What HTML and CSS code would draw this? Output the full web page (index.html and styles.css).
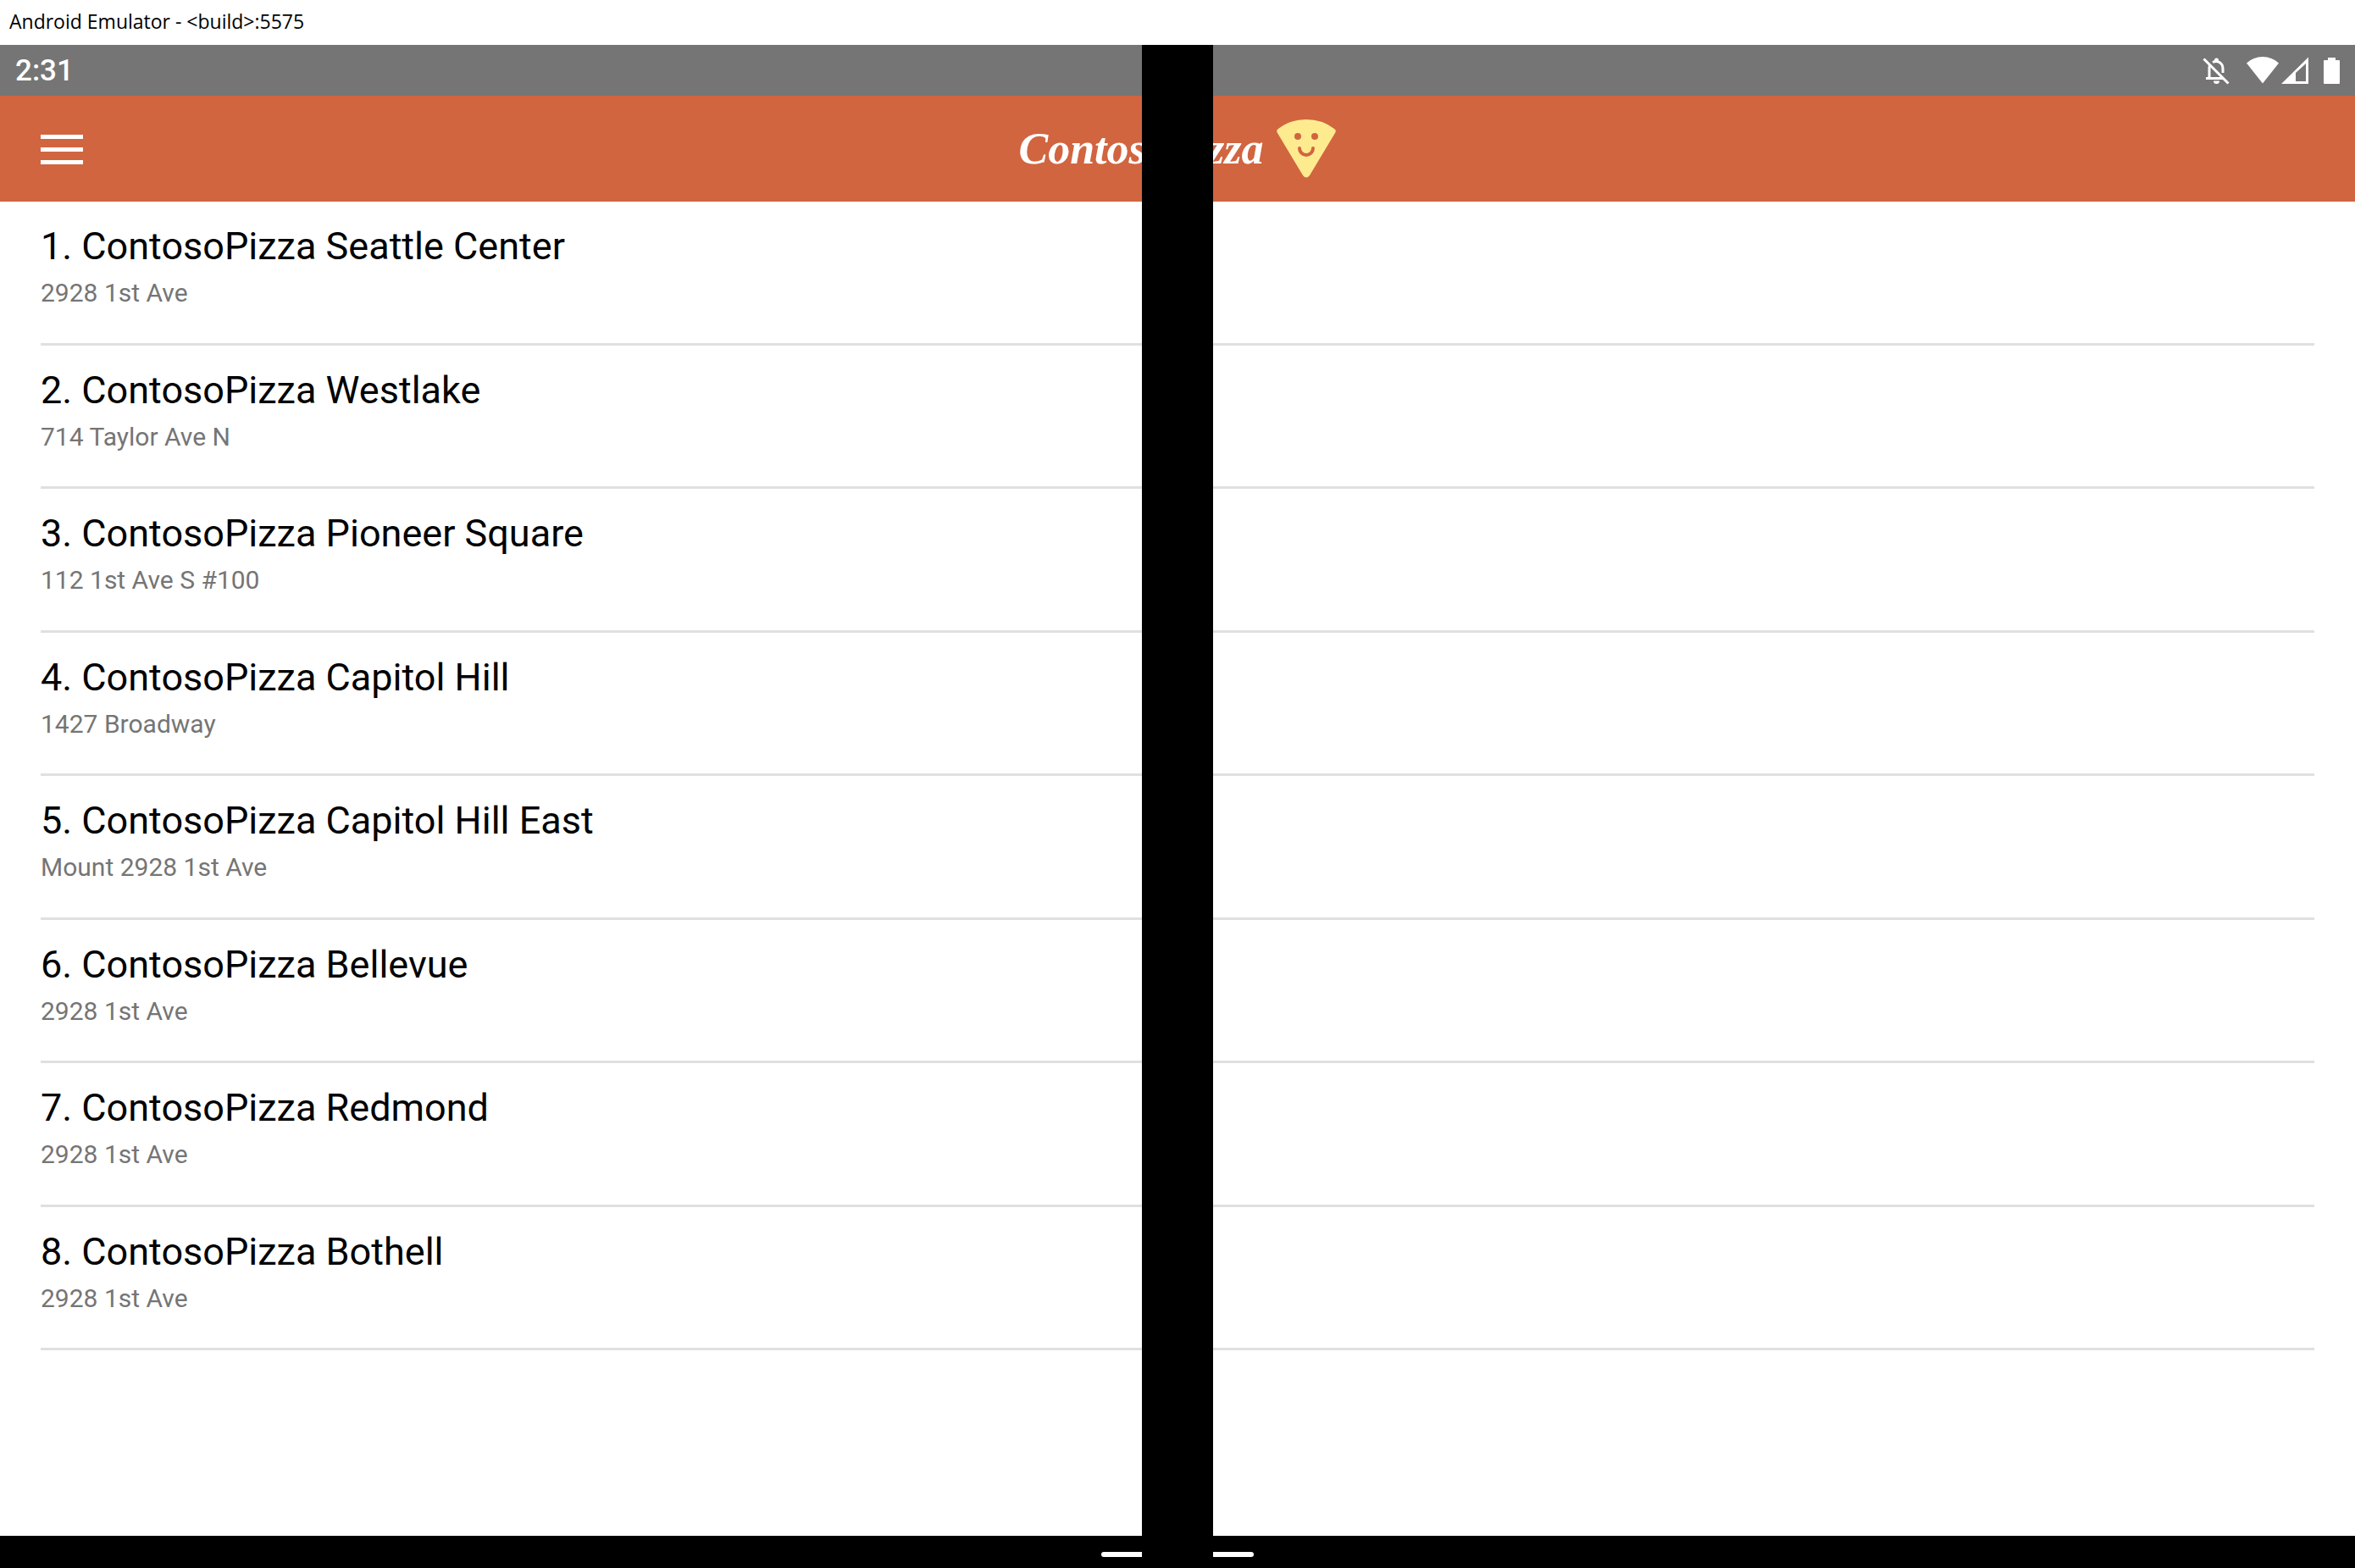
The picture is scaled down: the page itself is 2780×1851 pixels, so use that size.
FILE: index.html
```html
<!DOCTYPE html>
<html lang="en">
<head>
<meta charset="utf-8">
<meta name="viewport" content="width=device-width, initial-scale=1">
<title>Android Emulator</title>
<link rel="stylesheet" href="styles.css">
</head>
<body>
<div class="window">
  <div class="window-title">Android Emulator - &lt;build&gt;:5575</div>
  <div class="device">
    <div class="status-bar">
      <span class="clock">2:31</span>
      <svg class="status-icons" width="164" height="34" viewBox="0 0 164 34" fill="#fff" aria-hidden="true">
        <g fill="none" stroke="#fff" stroke-width="3">
          <path d="M1.500 3.500L30.500 32.500"/>
          <path d="M4 26.500H24"/>
          <path d="M8 26V14Q8 12 9 10.500"/>
          <path d="M12 7.500Q16 5.500 20 7.500Q24 10 24 15V20"/>
        </g>
        <path d="M14 7V5a2.500 2.500 0 0 1 5 0V7zM13 29.500H20a3.500 3.500 0 0 1-7 0z"/>
        <path d="M52 8.500Q60 1 71 1T90 8.500L71 32.500z"/>
        <path fill-rule="evenodd" d="M93 33L125 1.500V33zM110 20V30H122V9z"/>
        <path d="M148 2H157V5H161Q162 5 162 6V32Q162 33 161 33H144Q143 33 143 32V6Q143 5 144 5H148z"/>
      </svg>
    </div>
    <header class="app-bar">
      <button class="menu-button" type="button" aria-label="Menu"><span></span><span></span><span></span></button>
      <h1 class="brand">
        <span class="brand-name">ContosoPizza</span>
        <svg width="70" height="69" viewBox="0 0 70 69" aria-hidden="true">
          <path fill="#feeb90" d="M2 11Q16 0 35 0T68 11Q71 13 69 16L39 66Q35 71 31 66L1 16Q-1 13 2 11z"/>
          <circle cx="25" cy="20" r="4" fill="#d16540"/>
          <circle cx="45" cy="20" r="4" fill="#d16540"/>
          <path d="M27 34a8 8 0 0 0 16 0" fill="none" stroke="#d16540" stroke-width="4" stroke-linecap="round"/>
        </svg>
      </h1>
    </header>
    <main class="content">
      <ul class="stores">
        <li class="store"><h2 class="store-name">1. ContosoPizza Seattle Center</h2><p class="store-address">2928 1st Ave</p></li>
        <li class="store"><h2 class="store-name">2. ContosoPizza Westlake</h2><p class="store-address">714 Taylor Ave N</p></li>
        <li class="store"><h2 class="store-name">3. ContosoPizza Pioneer Square</h2><p class="store-address">112 1st Ave S #100</p></li>
        <li class="store"><h2 class="store-name">4. ContosoPizza Capitol Hill</h2><p class="store-address">1427 Broadway</p></li>
        <li class="store"><h2 class="store-name">5. ContosoPizza Capitol Hill East</h2><p class="store-address">Mount 2928 1st Ave</p></li>
        <li class="store"><h2 class="store-name">6. ContosoPizza Bellevue</h2><p class="store-address">2928 1st Ave</p></li>
        <li class="store"><h2 class="store-name">7. ContosoPizza Redmond</h2><p class="store-address">2928 1st Ave</p></li>
        <li class="store"><h2 class="store-name">8. ContosoPizza Bothell</h2><p class="store-address">2928 1st Ave</p></li>
      </ul>
    </main>
    <div class="nav-bar"><div class="home-pill"></div></div>
    <div class="hinge"></div>
  </div>
</div>
</body>
</html>
```
FILE: styles.css
```css
* {
  box-sizing: border-box;
}

body,
h1,
h2,
p,
ul {
  margin: 0;
  padding: 0;
  font-weight: 400;
}

body {
  background: #fff;
  color: #000;
  font-family: Roboto, "Liberation Sans", sans-serif;
}

.window {
  display: flex;
  flex-direction: column;
  min-height: 100vh;
}

.window-title {
  padding: 0 11px 3px;
  font-family: "Open Sans", "Noto Sans", sans-serif;
  font-size: 23px;
  line-height: 50px;
}

.device {
  position: relative;
  display: flex;
  flex: 1;
  flex-direction: column;
}

.status-bar {
  display: flex;
  align-items: center;
  justify-content: space-between;
  height: 60px;
  padding: 0 16px 0 18px;
  background: #757575;
  color: #fff;
}

.clock {
  padding-top: 2px;
  font-size: 35px;
  font-weight: 500;
  line-height: 58px;
}

.app-bar {
  display: grid;
  grid-template-columns: 1fr auto 1fr;
  align-items: center;
  height: 125px;
  padding: 0 48px;
  background: #d16540;
}

.menu-button {
  display: flex;
  flex-direction: column;
  justify-self: start;
  gap: 10px;
  width: 50px;
  padding: 2px 0 0;
  border: 0;
  background: none;
}

.menu-button span {
  height: 5px;
  background: #fff;
}

.brand {
  display: flex;
  align-items: center;
  gap: 16px;
  color: #fff;
}

.brand-name {
  font-family: "Liberation Serif", serif;
  font-size: 52px;
  font-style: italic;
  font-weight: 700;
  line-height: 60px;
}

.content {
  display: flex;
  flex: 1;
  padding: 0 48px 219px;
}

.stores {
  display: grid;
  flex: 1;
  grid-auto-rows: 1fr;
  list-style: none;
}

.store {
  padding: 23px 0;
  border-bottom: 3px solid #e0e0e0;
}

.store-name {
  font-size: 45px;
  line-height: 60px;
}

.store-address {
  color: #757575;
  font-size: 30px;
  line-height: 50px;
}

.nav-bar {
  display: flex;
  align-items: center;
  justify-content: center;
  height: 38px;
  padding-top: 6px;
  background: #000;
}

.home-pill {
  width: 180px;
  height: 6px;
  border-radius: 3px;
  background: #fff;
}

.hinge {
  position: absolute;
  inset: 0;
  width: 84px;
  margin: 0 auto;
  background: #000;
}
```
